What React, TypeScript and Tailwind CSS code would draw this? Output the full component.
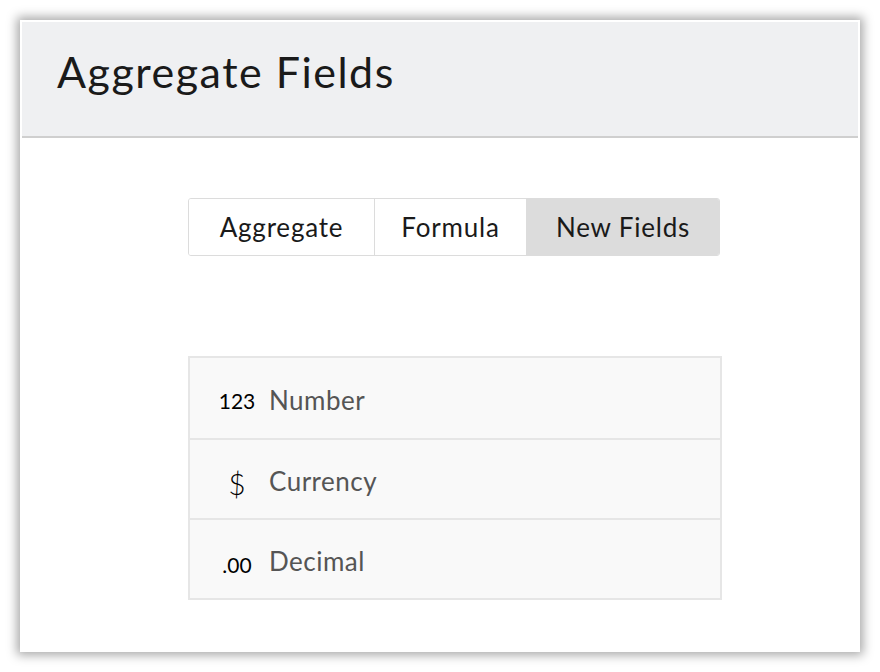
import React from "react";

export default function App() {
  const font = { fontFamily: "Lato, 'Open Sans', sans-serif" };
  return (
    <div className="w-[880px] h-[672px] bg-white pt-[20px] pl-[20px]" style={font}>
      <div className="w-[840px] h-[632px] bg-white p-[2px] shadow-[0_0_10px_3px_rgba(0,0,0,0.35)] flex flex-col">
        <div className="h-[116px] bg-[#eff0f2] border-b-2 border-[#cfcfcf] flex items-center pl-[35px] pb-[16px]">
          <h1 className="text-[43px] tracking-[1.5px] text-[#1a1a1a] leading-none">Aggregate Fields</h1>
        </div>
        <div className="pl-[166px] pt-[60px]">
          <div className="flex w-[532px] h-[58px] border border-[#dcdcdc] rounded-[3px] overflow-hidden text-[26px] tracking-[0.8px] text-[#1a1a1a]">
            <div className="w-[186px] flex items-center justify-center border-r border-[#dcdcdc] bg-white">Aggregate</div>
            <div className="w-[152px] flex items-center justify-center border-r border-[#dcdcdc] bg-white">Formula</div>
            <div className="flex-1 flex items-center justify-center bg-[#dcdcdc]">New Fields</div>
          </div>
          <div className="mt-[100px] w-[534px] border-2 border-[#e6e6e6] bg-[#f9f9f9]">
            {[
              { icon: "123", label: "Number", cls: "text-[21px] translate-y-[2px]" },
              { icon: "$", label: "Currency", cls: "text-[30px] font-light translate-y-[4px]" },
              { icon: ".00", label: "Decimal", cls: "text-[21px] translate-y-[5px]" },
            ].map((r, i) => (
              <div
                key={r.label}
                className={`h-[80px] flex items-center ${i > 0 ? "border-t-2 border-[#e6e6e6]" : ""}`}
              >
                <span className="w-[78px] flex justify-center pl-[16px]">
                  <span className={`${r.cls} text-black leading-none`}>{r.icon}</span>
                </span>
                <span className="pl-[1px] text-[26px] tracking-[0.5px] text-[#555555] leading-none translate-y-[2px]">{r.label}</span>
              </div>
            ))}
          </div>
        </div>
      </div>
    </div>
  );
}
